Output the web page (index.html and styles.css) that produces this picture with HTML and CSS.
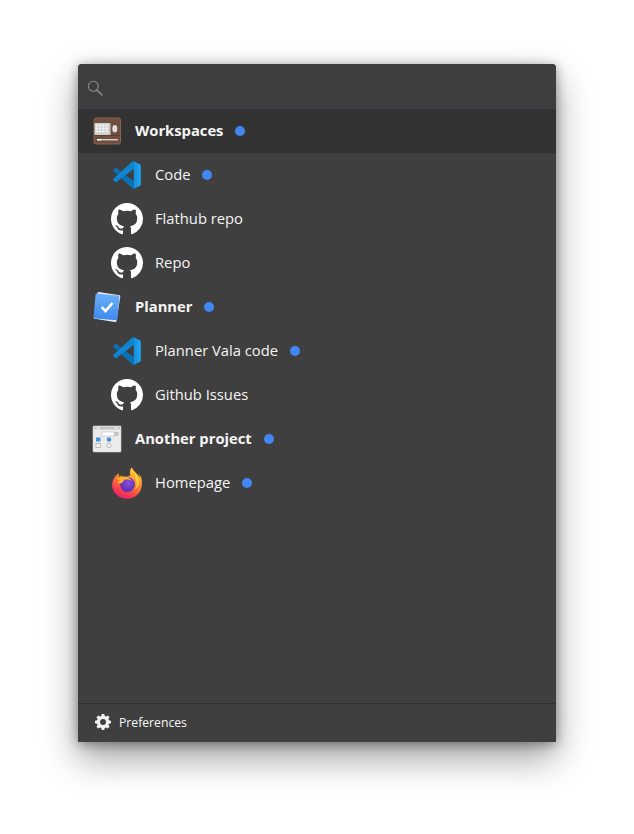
FILE: index.html
```html
<!DOCTYPE html>
<html lang="en">
<head>
<meta charset="utf-8">
<title>Workspaces</title>
<link rel="stylesheet" href="styles.css">
</head>
<body>
<svg class="defs" width="0" height="0" aria-hidden="true">
  <defs>
    <linearGradient id="vs1" x1="0" y1="0" x2="1" y2="0"><stop offset="0" stop-color="#1490dc"/><stop offset="1" stop-color="#26a8f5"/></linearGradient>
    <linearGradient id="chk" x1="0" y1="0" x2="0" y2="1"><stop offset="0" stop-color="#6aaef8"/><stop offset="1" stop-color="#3f8af0"/></linearGradient>
    <linearGradient id="ffa" x1="0.75" y1="0" x2="0.3" y2="1"><stop offset="0" stop-color="#ffdc3c"/><stop offset="0.4" stop-color="#ff8f2a"/><stop offset="0.8" stop-color="#f53a52"/><stop offset="1" stop-color="#ee1f6e"/></linearGradient>
    <radialGradient id="ffp" cx="0.55" cy="0.4" r="0.6"><stop offset="0" stop-color="#8a4fe0"/><stop offset="1" stop-color="#5b2fb0"/></radialGradient>
    <symbol id="i-code" viewBox="-2 -2 28 28">
      <path fill="#0a70b4" fill-rule="evenodd" d="M23.150 2.587 18.210.21a1.494 1.494 0 0 0-1.705.29l-9.460 8.630-4.120-3.128a.999.999 0 0 0-1.276.057L.327 7.261A1 1 0 0 0 .326 8.740L3.899 12 .326 15.260a1 1 0 0 0 .001 1.479L1.650 17.940a.999.999 0 0 0 1.276.057l4.120-3.128 9.460 8.630a1.492 1.492 0 0 0 1.704.29l4.942-2.377A1.500 1.500 0 0 0 24 20.060V3.939a1.500 1.500 0 0 0-.85-1.352zM18.004 17.448 10.826 12l7.178-5.448z"/>
      <path fill="#0f86d2" d="M.327 15.260 16.505.5a1.494 1.494 0 0 1 1.499-.36v6.412L2.926 17.997a.999.999 0 0 1-1.276-.057L.327 16.739a1 1 0 0 1 0-1.479z"/>
      <path fill="url(#vs1)" d="M18.004.14l.206.07 4.940 2.377A1.500 1.500 0 0 1 24 3.939V20.060a1.500 1.500 0 0 1-.85 1.352l-4.942 2.377a1.492 1.492 0 0 1-.204.081V17.448h0V6.552z"/>
    </symbol>
    <symbol id="i-github" viewBox="0 0 16 16">
      <path fill="#fff" d="M8 0C3.580 0 0 3.580 0 8c0 3.540 2.290 6.530 5.470 7.590.4.070.55-.17.55-.38 0-.19-.01-.82-.01-1.490-2.010.37-2.530-.49-2.690-.94-.09-.23-.48-.94-.82-1.130-.28-.15-.68-.52-.01-.53.63-.01 1.080.58 1.230.82.72 1.210 1.870.87 2.330.66.070-.52.28-.87.51-1.070-1.780-.2-3.640-.89-3.640-3.950 0-.87.31-1.590.82-2.150-.08-.2-.36-1.020.08-2.120 0 0 .67-.21 2.200.82.64-.18 1.320-.27 2-.27.68 0 1.360.09 2 .27 1.530-1.040 2.200-.82 2.200-.82.44 1.100.16 1.920.08 2.120.51.56.82 1.270.82 2.150 0 3.070-1.870 3.750-3.650 3.950.29.25.54.73.54 1.480 0 1.070-.01 1.930-.01 2.200 0 .21.15.46.55.38A8.013 8.013 0 0 0 16 8c0-4.420-3.580-8-8-8z"/>
    </symbol>
    <symbol id="i-firefox" viewBox="0 0 32 32">
      <path d="M30.500 11.200c-.5-1.600-1.700-3.300-2.700-4 .6 1.500.9 2.800 1 3.800C27 6.700 23 4.800 20.500.2c-1.600 2.800-2 5.700-1 8.200-2.200.2-3.500 1-4.400 2.300-1.300-.3-2.700-.2-3.700.3-.4-.6-.7-1.700-.8-2.700-.7.4-1.400 1.100-1.900 1.800-.6-.5-.9-2.400-.9-3.900C5.500 7.700 4.200 9.400 3.300 11 1.300 14 .3 18 1.900 22.500c1.900 5.400 8.100 9.300 14.100 9.300 8 0 14.500-6 14.800-13.500.1-2.800 0-5.200-.3-7.100z" fill="url(#ffa)"/>
      <circle cx="16.500" cy="17.500" r="7.400" fill="url(#ffp)"/>
      <path d="M5.400 11.200c.9 1.300 2.500 1.700 3.800 2.100-.9 1.100-2.300 1.700-3.300 1.900 1.500.7 2.900 1.300 4.300 1.100 1.300-.2 2.500-2.100 3.100-3.500 2.500-.6 5-.3 7.400 1.200-1.200-2.400-3.200-3.700-5.500-4.200-2.900-.6-5.400-.1-7 1.200-.9-.1-2-.3-2.800.2z" fill="#ffb02e"/>
      <path d="M23.800 10.500c2.500 3.200 2.700 8.300-.2 11.700 3.300-1.500 5.200-6.100 3.700-10.500-.5-1.600-1.600-4-3.200-5.300.4 1.600.3 3-.3 4.100z" fill="#ffd23c"/>
    </symbol>
  </defs>
</svg>
<main class="window">
  <header class="search">
    <svg class="search-icon" viewBox="0 0 16 16" width="16" height="16" aria-hidden="true">
      <circle cx="6.300" cy="6.300" r="5" fill="none" stroke="#8d8d8d" stroke-width="1.100"/>
      <path d="M10 10l5 5" stroke="#8d8d8d" stroke-width="1.600" stroke-linecap="round"/>
    </svg>
  </header>
  <ul class="list">
    <li class="row section selected">
      <svg class="icon" viewBox="0 0 32 32" aria-hidden="true">
        <rect x="3" y="3" width="26.500" height="26" rx="2" fill="#6f4e3f" stroke="#856555"/>
        <path d="M3.500 20.500h26" stroke="#5c3f32"/>
        <path d="M3.500 8h15a1 1 0 0 1 1 1v11h-16z" fill="#cfcfcf"/>
        <path d="M4.500 10.500h2.500M7.800 10.500h2.500M11 10.500h2.500M14.500 10.500H17M4.500 13.500h2.500M7.800 13.500h2.500M11 13.500h2.500M14.500 13.500H17M4.500 16.500h2.500M7.800 16.500h2.500M11 16.500h2.500M14.500 16.500H17" stroke="#f4f4f4" stroke-width="1.800"/>
        <ellipse cx="23.800" cy="13.800" rx="2.500" ry="3.800" fill="#dedede"/>
        <rect x="6" y="24" width="21" height="1.400" fill="#d9d4d0"/>
        <rect x="6" y="24" width="4" height="1.400" fill="#fff"/>
      </svg>
      <span class="label">Workspaces</span><span class="dot"></span>
    </li>
    <li class="row child">
      <svg class="icon" aria-hidden="true"><use href="#i-code"/></svg>
      <span class="label">Code</span><span class="dot"></span>
    </li>
    <li class="row child">
      <svg class="icon" aria-hidden="true"><use href="#i-github"/></svg>
      <span class="label">Flathub repo</span>
    </li>
    <li class="row child">
      <svg class="icon" aria-hidden="true"><use href="#i-github"/></svg>
      <span class="label">Repo</span>
    </li>
    <li class="row section">
      <svg class="icon" viewBox="0 0 32 32" aria-hidden="true">
        <rect x="4.500" y="2.500" width="23" height="27" rx="1" fill="#f2f2f2" transform="rotate(9 16 16)"/>
        <rect x="3.500" y="3.500" width="24" height="25" rx="1.200" fill="url(#chk)" transform="rotate(5 16 16)"/>
        <path d="M10.700 16.200l3.800 3.800 7-8" fill="none" stroke="#fff" stroke-width="2.600"/>
      </svg>
      <span class="label">Planner</span><span class="dot"></span>
    </li>
    <li class="row child">
      <svg class="icon" aria-hidden="true"><use href="#i-code"/></svg>
      <span class="label">Planner Vala code</span><span class="dot"></span>
    </li>
    <li class="row child">
      <svg class="icon" aria-hidden="true"><use href="#i-github"/></svg>
      <span class="label">Github Issues</span>
    </li>
    <li class="row section">
      <svg class="icon" viewBox="0 0 32 32" aria-hidden="true">
        <rect x="2" y="3" width="28" height="26" rx="1" fill="#ececec" stroke="#d0d0d0" stroke-width=".6"/>
        <rect x="2" y="3" width="28" height="4" fill="#dcdcdc"/>
        <path d="M9 5h14" stroke="#a8a8a8"/>
        <path d="M3.500 4.300l1.500 1.500M27 4.300l1.500 1.500" stroke="#8a8a8a" stroke-width=".8"/>
        <rect x="11" y="9" width="12" height="4" fill="#fff" stroke="#bdbdbd" stroke-width=".6"/>
        <rect x="23.500" y="9" width="4" height="4" fill="#c4c4c4"/>
        <rect x="5" y="14.500" width="4.500" height="4" fill="#4a90d9"/>
        <circle cx="18" cy="16.500" r="2.300" fill="#4a90d9"/>
        <rect x="5" y="20.500" width="4.500" height="4" fill="#f4f4f4" stroke="#999" stroke-width=".6"/>
        <circle cx="18" cy="22.500" r="2.100" fill="#f4f4f4" stroke="#999" stroke-width=".6"/>
      </svg>
      <span class="label">Another project</span><span class="dot"></span>
    </li>
    <li class="row child">
      <svg class="icon" aria-hidden="true"><use href="#i-firefox"/></svg>
      <span class="label">Homepage</span><span class="dot"></span>
    </li>
  </ul>
  <footer class="footer">
    <svg class="gear" viewBox="0 0 16 16" width="16" height="16" aria-hidden="true">
      <path fill="#f2f2f2" fill-rule="evenodd" d="M6.700 0h2.600l.4 2.100 1.200.5 1.800-1.200 1.900 1.900-1.200 1.800.5 1.200 2.100.4v2.600l-2.100.4-.5 1.200 1.200 1.800-1.900 1.900-1.800-1.200-1.200.5-.4 2.100H6.700l-.4-2.100-1.200-.5-1.800 1.200-1.900-1.900 1.200-1.800-.5-1.200L0 9.300V6.700l2.100-.4.5-1.200-1.200-1.800 1.900-1.900 1.800 1.200 1.200-.5zM8 5a3 3 0 1 0 0 6 3 3 0 0 0 0-6z"/>
    </svg>
    <span class="footer-label">Preferences</span>
  </footer>
</main>
</body>
</html>
```

FILE: styles.css
```css
* { box-sizing: border-box; }

html, body { margin: 0; padding: 0; }

body {
  width: 634px;
  height: 834px;
  overflow: hidden;
  background: #fff;
  padding: 64px 78px 92px;
  font-family: "Open Sans", "Noto Sans", sans-serif;
  color: #f5f5f5;
}

.defs { display: block; width: 0; height: 0; position: absolute; }

.window {
  display: flex;
  flex-direction: column;
  height: 678px;
  background: #3f3f3f;
  border-radius: 4px 4px 0 0;
  box-shadow: 0 16px 36px rgba(0, 0, 0, .38), 0 2px 12px rgba(0, 0, 0, .38);
  overflow: hidden;
}

.search {
  display: flex;
  align-items: center;
  height: 45px;
  padding: 4px 0 0 9px;
  background: #3e3e3e;
  border-bottom: 1px solid #3a434c;
}

.search-icon { display: block; }

.list {
  flex: 1;
  margin: 0;
  padding: 0;
  list-style: none;
}

.row {
  display: flex;
  align-items: center;
  height: 44px;
  gap: 12px;
  font-size: 14.75px;
}

.label { padding-bottom: 2px; }

.section { padding-left: 13px; font-weight: 700; }

.child { padding-left: 33px; }

.selected { background: #323232; }

.icon { width: 32px; height: 32px; flex: none; display: block; }

.dot {
  width: 10px;
  height: 10px;
  border-radius: 50%;
  background: #4286f4;
  flex: none;
}

.footer {
  display: flex;
  align-items: center;
  gap: 8px;
  height: 39px;
  padding: 0 0 2px 17px;
  border-top: 1px solid #2f2f2f;
}

.gear { display: block; }

.footer-label { font-size: 12.2px; }
```
